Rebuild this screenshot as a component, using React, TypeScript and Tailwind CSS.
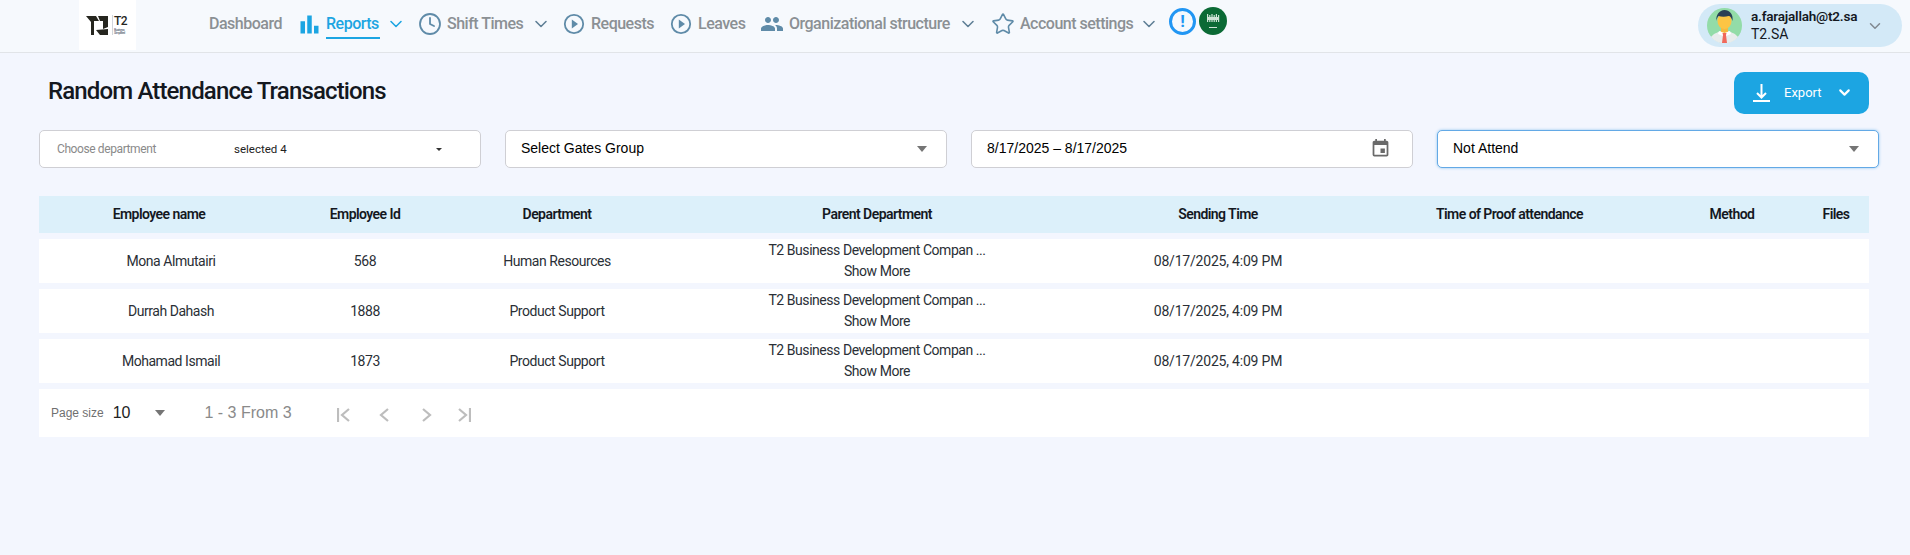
import { ChevronDown, Clock, Star } from "lucide-react";
import { MdBarChart, MdEvent, MdPeople } from "react-icons/md";

const rows = [
  { name: "Mona Almutairi", id: "568", department: "Human Resources" },
  { name: "Durrah Dahash", id: "1888", department: "Product Support" },
  { name: "Mohamad Ismail", id: "1873", department: "Product Support" },
];

const columns = "grid grid-cols-[240px_172px_212px_428px_254px_329px_116px_79px] items-center text-center";

function NavChevron({ className = "text-[#5f7f96]" }: { className?: string }) {
  return (
    <span className={`w-[24px] flex justify-center ${className}`}>
      <ChevronDown size={20} strokeWidth={1.9} />
    </span>
  );
}

function Caret({ className = "" }: { className?: string }) {
  return <span className={`w-0 h-0 border-x-[5px] border-x-transparent border-t-[6px] border-t-[#757575] ${className}`} />;
}

function PlayIcon({ className = "" }: { className?: string }) {
  return (
    <svg width="24" height="24" viewBox="0 0 24 24" className={`text-[#5f8ba8] ${className}`}>
      <circle cx="12" cy="12" r="9.200" fill="none" stroke="currentColor" strokeWidth="1.800" />
      <path fill="currentColor" d="M9.800 7.500l6.200 4.500-6.200 4.500z" />
    </svg>
  );
}

function PagerIcon({ d, className = "" }: { d: string; className?: string }) {
  return (
    <svg width="14" height="14" viewBox="0 0 14 14" fill="none" stroke="#bdbdbd" strokeWidth="2.200" className={className}>
      <path d={d} />
    </svg>
  );
}

function Logo() {
  return (
    <div className="ml-[79px] w-[57px] h-[50px] bg-white flex items-center pl-[7px] self-start">
      <svg width="22" height="19" viewBox="0 0 22 19" className="text-[#26261f]">
        <path fill="currentColor" d="M0 0h10l3 5H8v14H5V6zM12 0h10v11l-5 2V5h-3zM10 14l12-1v6h-8z" />
      </svg>
      <div className="ml-[4px] w-px h-[20px] bg-gray-300" />
      <div className="ml-[1px] flex flex-col leading-none">
        <span className="text-[12px] text-[#26261f]">T2</span>
        <span className="text-[3.500px] text-gray-500 mt-[2px]">Business</span>
        <span className="text-[3.500px] text-gray-500">Simplified</span>
      </div>
    </div>
  );
}

function Avatar() {
  return (
    <svg width="35" height="35" viewBox="0 0 35 35">
      <circle cx="17.500" cy="17.500" r="17.500" fill="#93dca8" />
      <path fill="#e8ecec" d="M4 29c3-4 8-5 10-6h7c2 1 7 2 10 6a17.500 17.500 0 0 1-27 0z" />
      <rect x="14" y="18" width="7" height="7" fill="#f5b93f" />
      <path fill="#ffffff" d="M12 23l5.500 2 5.500-2 1 3-5 2h-3l-5-2z" />
      <path fill="#f0695b" d="M15.500 25h4l-.5 2 1 8h-5l1-8z" />
      <ellipse cx="17.500" cy="13" rx="7" ry="8" fill="#fcc544" />
      <path fill="#2b3f55" d="M9.500 13c-1-6 3-11 8-11s9 4 8 11c-1-3-2-5-4-5-3 1-7 1-10 0-1 1-2 3-2 5z" />
    </svg>
  );
}

function Flag() {
  return (
    <svg width="28" height="28" viewBox="0 0 28 28" className="ml-[3px] self-start mt-[7px]">
      <circle cx="14" cy="14" r="14" fill="#0b6a35" />
      <path fill="#cfe4d7" d="M8 7h1.200v8H8zM10.200 8h1.200v7h-1.200zM12.400 7h1.200v8h-1.200zM14.600 8h1.200v7h-1.200zM16.800 7H18v8h-1.200zM19 8h1.200v7H19zM8 10h12v3H8z" />
      <rect x="10" y="20" width="8" height="1" fill="#cfe4d7" />
    </svg>
  );
}

export default function App() {
  return (
    <div className="min-h-screen bg-[#f3f6fe] font-['Roboto',sans-serif] text-[#212529]">
      <header className="h-[53px] pb-[4px] bg-[#f6f9fd] border-b border-[#e1e4e8] flex items-center text-[#8b9094] text-[16px] font-medium tracking-[-0.5px]">
        <Logo />
        <span className="ml-[73px] w-[74px] whitespace-nowrap">Dashboard</span>
        <MdBarChart size={27} className="ml-[13px] text-[#1ca5e2]" />
        <span className="ml-[3px] w-[54px] h-[30px] leading-[30px] text-[#1ca5e2] border-b-2 border-[#1ca5e2] whitespace-nowrap">Reports</span>
        <NavChevron className="ml-[4px] text-[#1ca5e2]" />
        <Clock size={24} strokeWidth={1.8} className="ml-[10px] text-[#5f8ba8]" />
        <span className="ml-[5px] w-[76px] whitespace-nowrap">Shift Times</span>
        <NavChevron className="ml-[6px] text-[#5f7f96]" />
        <PlayIcon className="ml-[9px]" />
        <span className="ml-[5px] w-[63px] whitespace-nowrap">Requests</span>
        <PlayIcon className="ml-[15px]" />
        <span className="ml-[5px] w-[46px] whitespace-nowrap">Leaves</span>
        <MdPeople size={24} className="ml-[16px] text-[#5f8ba8]" />
        <span className="ml-[5px] w-[162px] whitespace-nowrap">Organizational structure</span>
        <NavChevron className="ml-[5px] text-[#5f7f96]" />
        <Star size={24} strokeWidth={1.6} className="ml-[11px] text-[#5f8ba8]" />
        <span className="ml-[5px] w-[111px] whitespace-nowrap">Account settings</span>
        <NavChevron className="ml-[6px] text-[#5f7f96]" />
        <div className="ml-[8px] w-[27px] h-[27px] rounded-full border-[3px] border-[#2196f3] flex items-center justify-center text-[#2196f3] text-[17px] font-bold self-start mt-[8px] tracking-normal">!</div>
        <Flag />
        <div className="ml-auto mr-[8px] self-start mt-[4px] w-[204px] h-[43px] rounded-full bg-[#d3e9f7] flex items-center pl-[9px] pr-[18px] tracking-normal">
          <Avatar />
          <div className="ml-[9px] -mt-[1px] leading-[18px]">
            <p className="text-[13.500px] font-semibold text-[#14181f] whitespace-nowrap tracking-[-0.2px]">a.farajallah@t2.sa</p>
            <p className="text-[14px] font-normal text-[#14181f]">T2.SA</p>
          </div>
          <ChevronDown size={18} strokeWidth={2} className="ml-auto text-[#808890]" />
        </div>
      </header>

      <main className="pl-[39px] pt-[19px] w-[1869px]">
        <div className="flex items-center justify-between">
          <h1 className="ml-[9px] pb-[4px] text-[24px] font-medium text-[#14181f] tracking-[-0.85px]">Random Attendance Transactions</h1>
          <button className="w-[135px] h-[42px] rounded-[10px] bg-[#1ca5e2] text-white flex items-center pl-[19px] text-[13px]">
            <svg width="17" height="18" viewBox="0 0 17 18" fill="none" stroke="white" strokeWidth="2">
              <path d="M8.500 0v13M4 9l4.500 4.500L13 9M0 17h17" />
            </svg>
            <span className="ml-[14px]">Export</span>
            <ChevronDown size={17} strokeWidth={3} className="ml-[14px] -mt-[2px]" />
          </button>
        </div>

        <div className="mt-[16px] w-[1840px] grid grid-cols-4 gap-[24px] font-['Liberation_Sans',sans-serif] text-[14px] text-black">
          <div className="h-[38px] bg-white border border-[#cfcfd4] rounded-[5px] flex items-center pl-[17px] pr-[38px] font-['Roboto',sans-serif]">
            <span className="w-[177px] text-[12px] text-[#8a8a8a] tracking-[-0.4px]">Choose department</span>
            <span className="mt-[2px] text-[11.500px] text-[#222]">selected 4</span>
            <span className="ml-auto w-0 h-0 border-x-[3px] border-x-transparent border-t-[3px] border-t-[#333]" />
          </div>
          <div className="h-[38px] pb-[2px] bg-white border border-[#cfcfd4] rounded-[5px] flex items-center pl-[15px] pr-[19px]">
            <span>Select Gates Group</span>
            <Caret className="ml-auto mt-[2px]" />
          </div>
          <div className="h-[38px] pb-[2px] bg-white border border-[#cfcfd4] rounded-[5px] flex items-center pl-[15px] pr-[21px]">
            <span>8/17/2025 – 8/17/2025</span>
            <MdEvent size={21} className="ml-auto text-[#6a6a6a]" />
          </div>
          <div className="h-[38px] pb-[2px] bg-white border border-[#63a9e6] rounded-[5px] shadow-[0_0_3px_#8fc4ee] flex items-center pl-[15px] pr-[19px]">
            <span>Not Attend</span>
            <Caret className="ml-auto mt-[2px]" />
          </div>
        </div>

        <div className="mt-[28px] text-[14px] tracking-[-0.45px]">
          <div className={`${columns} h-[37px] bg-[#dcf0fa] font-semibold tracking-[-0.55px] text-[#14181f]`}>
            <span>Employee name</span>
            <span>Employee Id</span>
            <span>Department</span>
            <span>Parent Department</span>
            <span>Sending Time</span>
            <span>Time of Proof attendance</span>
            <span>Method</span>
            <span className="pl-[13px]">Files</span>
          </div>
          {rows.map((row) => (
            <div key={row.id} className={`${columns} h-[44px] mt-[6px] bg-white text-[#2a2f36] leading-[21px]`}>
              <span className="pl-[24px]">{row.name}</span>
              <span>{row.id}</span>
              <span>{row.department}</span>
              <div>
                <p>T2 Business Development Compan ...</p>
                <p>Show More</p>
              </div>
              <span className="tracking-[-0.2px]">08/17/2025, 4:09 PM</span>
              <span />
              <span />
              <span />
            </div>
          ))}
          <div className="mt-[6px] h-[48px] bg-white flex items-center pl-[12px] font-['Liberation_Sans',sans-serif] tracking-normal">
            <span className="text-[12px] text-[#6f6f6f]">Page size</span>
            <span className="ml-[9px] text-[16px] text-[#222]">10</span>
            <Caret className="ml-[24px]" />
            <span className="ml-[40px] text-[16px] text-[#8a8a8a]">1 - 3 From 3</span>
            <div className="ml-[45px] mt-[4px] flex items-center">
              <PagerIcon d="M1 0v14M12 1L5 7l7 6" />
              <PagerIcon d="M10 1L3 7l7 6" className="ml-[27px]" />
              <PagerIcon d="M4 1l7 6-7 6" className="ml-[27px]" />
              <PagerIcon d="M13 0v14M2 1l7 6-7 6" className="ml-[24px]" />
            </div>
          </div>
        </div>
      </main>
    </div>
  );
}
